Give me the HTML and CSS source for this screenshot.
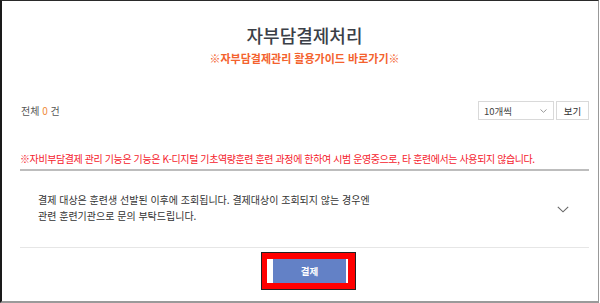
FILE: index.html
```html
<!DOCTYPE html>
<html lang="ko">
<head>
<meta charset="utf-8">
<link rel="stylesheet" href="styles.css">
</head>
<body>
<div class="frame">
  <header class="head">
    <h1 class="title">자부담결제처리</h1>
    <a class="guide">※자부담결제관리 활용가이드 바로가기※</a>
  </header>
  <div class="toolbar">
    <div class="total">전체 <span class="num">0</span> 건</div>
    <div class="tools">
      <div class="select"><span>10개씩</span>
        <svg class="sel-chev" width="7" height="4" viewBox="0 0 7 4"><path d="M0.5 0.5 L3.5 3.3 L6.5 0.5" fill="none" stroke="#999" stroke-width="1"/></svg>
      </div>
      <button class="view">보기</button>
    </div>
  </div>
  <p class="notice">※자비부담결제 관리 기능은 기능은 K-디지털 기초역량훈련 훈련 과정에 한하여 시범 운영중으로, 타 훈련에서는 사용되지 않습니다.</p>
  <div class="item">
    <p class="item-text">결제 대상은 훈련생 선발된 이후에 조회됩니다. 결제대상이 조회되지 않는 경우엔<br>관련 훈련기관으로 문의 부탁드립니다.</p>
    <svg class="chev" width="12" height="7" viewBox="0 0 12 7"><path d="M0.8 0.8 L6 5.8 L11.2 0.8" fill="none" stroke="#666" stroke-width="1.1"/></svg>
  </div>
  <div class="actions">
    <div class="highlight"><button class="pay">결제</button></div>
  </div>
</div>
</body>
</html>
```
FILE: styles.css
```css
* { box-sizing: border-box; }
html, body { margin: 0; padding: 0; background: #fff; }
body { font-family: "Noto Sans CJK KR", "Noto Sans", sans-serif; color: #333; }
.frame {
  width: 599px;
  height: 303px;
  border-left: 2px solid #1a1a1a;
  border-top: 1px solid #2a2a2a;
  border-right: 1px solid #999;
  border-bottom: 2px solid #9a9a9a;
  padding: 0 9px 0 18px;
  display: flex;
  flex-direction: column;
}
.head {
  display: flex;
  flex-direction: column;
  align-items: center;
  padding-top: 22px;
}
.title {
  margin: 0;
  font-size: 18px;
  line-height: 24px;
  font-weight: 500;
  color: #3b3f47;
}
.guide {
  font-size: 11px;
  line-height: 14px;
  font-weight: 700;
  color: #f4622d;
  margin-top: 4px;
}
.toolbar {
  display: flex;
  justify-content: space-between;
  align-items: center;
  margin-top: 36px;
  height: 19px;
}
.total { font-size: 10px; color: #555; padding-left: 1px; }
.num { color: #f08a3a; }
.tools { display: flex; gap: 2px; }
.select {
  width: 76px;
  height: 19px;
  border: 1px solid #d9d9d9;
  display: flex;
  align-items: center;
  justify-content: space-between;
  padding: 0 6px 0 5px;
  font-size: 9.5px;
  color: #444;
}
.view {
  width: 33px;
  height: 19px;
  border: 1px solid #d9d9d9;
  background: #fff;
  font-family: inherit;
  font-size: 9.5px;
  color: #333;
  padding: 0;
}
.notice {
  margin: 32px 0 0;
  font-size: 10px;
  line-height: 14px;
  color: #f5222d;
  padding-bottom: 3px;
  border-bottom: 2px solid #bdbdbd;
  letter-spacing: -0.4px;
}
.item {
  display: flex;
  align-items: center;
  justify-content: space-between;
  padding: 21px 20px 23px 18px;
  border-bottom: 1px solid #e6e6e6;
}
.item-text {
  margin: 0;
  font-size: 10px;
  line-height: 16px;
  color: #333;
}
.chev { margin-top: 2px; }
.actions {
  display: flex;
  justify-content: center;
  padding-top: 4px;
}
.highlight {
  margin-left: 8px;
  border: 1px solid #222;
  background: #ff0000;
  padding: 6px 7px 6px 5px;
}
.highlight .pay {
  display: block;
  width: 81px;
  height: 24px;
  border: none;
  border-left: 6px solid #fff;
  border-right: 2px solid #fff;
  background: #6381c6;
  color: #fff;
  font-family: inherit;
  font-size: 9.5px;
  font-weight: 700;
  padding: 0;
}
```
